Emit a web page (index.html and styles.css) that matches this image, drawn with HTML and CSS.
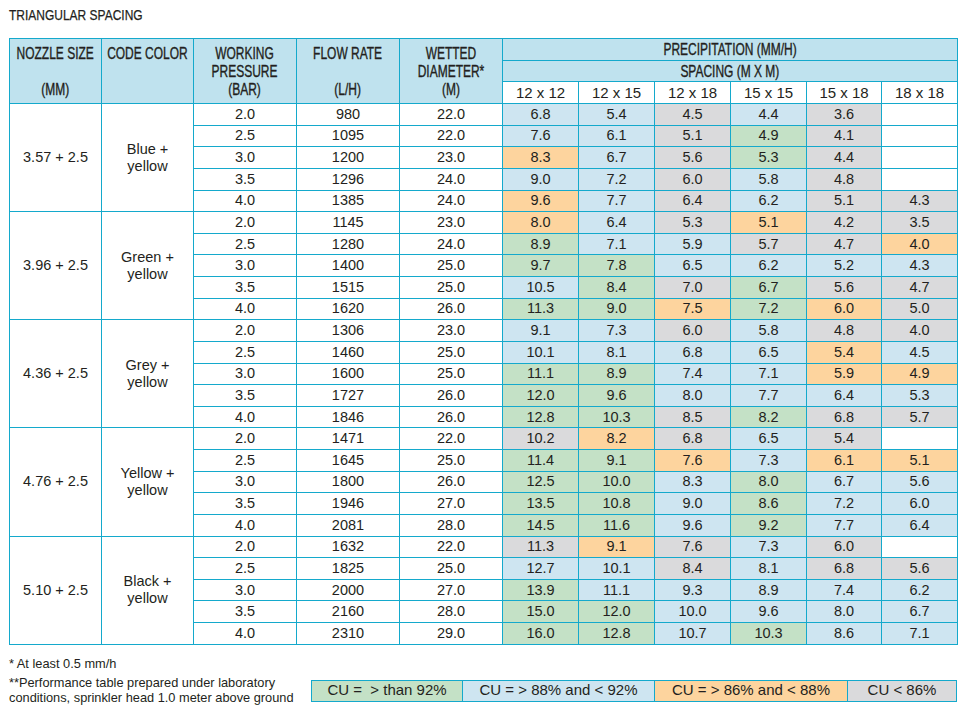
FILE: index.html
```html
<!DOCTYPE html>
<html>
<head>
<meta charset="utf-8">
<title>Triangular spacing</title>
<link rel="stylesheet" href="styles.css">
</head>
<body>
<div class="page">
  <h1 class="title"><span class="cn">TRIANGULAR SPACING</span></h1>
  <table class="perf">
    <colgroup>
      <col class="c-noz"><col class="c-code"><col class="c-wp"><col class="c-fr"><col class="c-wd">
      <col class="c-sp"><col class="c-sp"><col class="c-sp"><col class="c-sp"><col class="c-sp5"><col class="c-sp6">
    </colgroup>
    <thead>
      <tr class="h1">
        <th rowspan="3" class="hd"><span class="cn">NOZZLE SIZE<br>&nbsp;<br>(MM)</span></th>
        <th rowspan="3" class="hd"><span class="cn">CODE COLOR</span></th>
        <th rowspan="3" class="hd"><span class="cn">WORKING<br>PRESSURE<br>(BAR)</span></th>
        <th rowspan="3" class="hd"><span class="cn">FLOW RATE<br>&nbsp;<br>(L/H)</span></th>
        <th rowspan="3" class="hd"><span class="cn">WETTED<br>DIAMETER*<br>(M)</span></th>
        <th colspan="6" class="hs"><span class="cn">PRECIPITATION (MM/H)</span></th>
      </tr>
      <tr class="h2">
        <th colspan="6" class="hs"><span class="cn">SPACING (M X M)</span></th>
      </tr>
      <tr class="h3">
        <th class="sl">12 x 12</th><th class="sl">12 x 15</th><th class="sl">12 x 18</th><th class="sl">15 x 15</th><th class="sl">15 x 18</th><th class="sl">18 x 18</th>
      </tr>
    </thead>
    <tbody>
      <tr><td rowspan="5">3.57 + 2.5</td><td rowspan="5" class="cc">Blue +<br>yellow</td><td>2.0</td><td>980</td><td>22.0</td><td class="b">6.8</td><td class="b">5.4</td><td class="y">4.5</td><td class="b">4.4</td><td class="y">3.6</td><td></td></tr>
      <tr><td>2.5</td><td>1095</td><td>22.0</td><td class="b">7.6</td><td class="b">6.1</td><td class="y">5.1</td><td class="g">4.9</td><td class="y">4.1</td><td></td></tr>
      <tr><td>3.0</td><td>1200</td><td>23.0</td><td class="o">8.3</td><td class="b">6.7</td><td class="y">5.6</td><td class="g">5.3</td><td class="y">4.4</td><td></td></tr>
      <tr><td>3.5</td><td>1296</td><td>24.0</td><td class="b">9.0</td><td class="b">7.2</td><td class="y">6.0</td><td class="b">5.8</td><td class="y">4.8</td><td></td></tr>
      <tr><td>4.0</td><td>1385</td><td>24.0</td><td class="o">9.6</td><td class="b">7.7</td><td class="y">6.4</td><td class="b">6.2</td><td class="y">5.1</td><td class="y">4.3</td></tr>

      <tr><td rowspan="5">3.96 + 2.5</td><td rowspan="5" class="cc">Green +<br>yellow</td><td>2.0</td><td>1145</td><td>23.0</td><td class="o">8.0</td><td class="b">6.4</td><td class="y">5.3</td><td class="o">5.1</td><td class="y">4.2</td><td class="y">3.5</td></tr>
      <tr><td>2.5</td><td>1280</td><td>24.0</td><td class="g">8.9</td><td class="b">7.1</td><td class="b">5.9</td><td class="y">5.7</td><td class="y">4.7</td><td class="o">4.0</td></tr>
      <tr><td>3.0</td><td>1400</td><td>25.0</td><td class="g">9.7</td><td class="g">7.8</td><td class="b">6.5</td><td class="b">6.2</td><td class="b">5.2</td><td class="b">4.3</td></tr>
      <tr><td>3.5</td><td>1515</td><td>25.0</td><td class="b">10.5</td><td class="g">8.4</td><td class="y">7.0</td><td class="g">6.7</td><td class="y">5.6</td><td class="y">4.7</td></tr>
      <tr><td>4.0</td><td>1620</td><td>26.0</td><td class="g">11.3</td><td class="g">9.0</td><td class="o">7.5</td><td class="g">7.2</td><td class="o">6.0</td><td class="y">5.0</td></tr>

      <tr><td rowspan="5">4.36 + 2.5</td><td rowspan="5" class="cc">Grey +<br>yellow</td><td>2.0</td><td>1306</td><td>23.0</td><td class="b">9.1</td><td class="b">7.3</td><td class="y">6.0</td><td class="b">5.8</td><td class="y">4.8</td><td class="y">4.0</td></tr>
      <tr><td>2.5</td><td>1460</td><td>25.0</td><td class="b">10.1</td><td class="b">8.1</td><td class="b">6.8</td><td class="b">6.5</td><td class="o">5.4</td><td class="b">4.5</td></tr>
      <tr><td>3.0</td><td>1600</td><td>25.0</td><td class="g">11.1</td><td class="g">8.9</td><td class="b">7.4</td><td class="b">7.1</td><td class="o">5.9</td><td class="o">4.9</td></tr>
      <tr><td>3.5</td><td>1727</td><td>26.0</td><td class="g">12.0</td><td class="g">9.6</td><td class="b">8.0</td><td class="b">7.7</td><td class="b">6.4</td><td class="b">5.3</td></tr>
      <tr><td>4.0</td><td>1846</td><td>26.0</td><td class="g">12.8</td><td class="g">10.3</td><td class="y">8.5</td><td class="g">8.2</td><td class="y">6.8</td><td class="y">5.7</td></tr>

      <tr><td rowspan="5">4.76 + 2.5</td><td rowspan="5" class="cc">Yellow +<br>yellow</td><td>2.0</td><td>1471</td><td>22.0</td><td class="y">10.2</td><td class="o">8.2</td><td class="y">6.8</td><td class="b">6.5</td><td class="y">5.4</td><td></td></tr>
      <tr><td>2.5</td><td>1645</td><td>25.0</td><td class="g">11.4</td><td class="g">9.1</td><td class="o">7.6</td><td class="b">7.3</td><td class="o">6.1</td><td class="o">5.1</td></tr>
      <tr><td>3.0</td><td>1800</td><td>26.0</td><td class="g">12.5</td><td class="g">10.0</td><td class="b">8.3</td><td class="g">8.0</td><td class="b">6.7</td><td class="b">5.6</td></tr>
      <tr><td>3.5</td><td>1946</td><td>27.0</td><td class="g">13.5</td><td class="g">10.8</td><td class="b">9.0</td><td class="g">8.6</td><td class="b">7.2</td><td class="b">6.0</td></tr>
      <tr><td>4.0</td><td>2081</td><td>28.0</td><td class="g">14.5</td><td class="g">11.6</td><td class="b">9.6</td><td class="g">9.2</td><td class="b">7.7</td><td class="b">6.4</td></tr>

      <tr><td rowspan="5">5.10 + 2.5</td><td rowspan="5" class="cc">Black +<br>yellow</td><td>2.0</td><td>1632</td><td>22.0</td><td class="y">11.3</td><td class="o">9.1</td><td class="y">7.6</td><td class="b">7.3</td><td class="y">6.0</td><td></td></tr>
      <tr><td>2.5</td><td>1825</td><td>25.0</td><td class="b">12.7</td><td class="b">10.1</td><td class="y">8.4</td><td class="b">8.1</td><td class="y">6.8</td><td class="y">5.6</td></tr>
      <tr><td>3.0</td><td>2000</td><td>27.0</td><td class="g">13.9</td><td class="b">11.1</td><td class="b">9.3</td><td class="b">8.9</td><td class="b">7.4</td><td class="b">6.2</td></tr>
      <tr><td>3.5</td><td>2160</td><td>28.0</td><td class="g">15.0</td><td class="g">12.0</td><td class="b">10.0</td><td class="b">9.6</td><td class="b">8.0</td><td class="b">6.7</td></tr>
      <tr><td>4.0</td><td>2310</td><td>29.0</td><td class="g">16.0</td><td class="g">12.8</td><td class="b">10.7</td><td class="g">10.3</td><td class="b">8.6</td><td class="b">7.1</td></tr>
    </tbody>
  </table>

  <div class="notes">
    <p class="note1">* At least 0.5 mm/h</p>
    <div class="note-row">
      <p class="note2">**Performance table prepared under laboratory<br>conditions, sprinkler head 1.0 meter above ground</p>
      <div class="legend">
        <div class="lg g l1">CU =&nbsp; &gt; than 92%</div>
        <div class="lg b l2">CU = &gt; 88% and &lt; 92%</div>
        <div class="lg o l3">CU = &gt; 86% and &lt; 88%</div>
        <div class="lg y l4">CU &lt; 86%</div>
      </div>
    </div>
  </div>
</div>
</body>
</html>
```
FILE: styles.css
```css
* { box-sizing: border-box; }

body {
  margin: 0;
  background: #ffffff;
  color: #231f20;
  font-family: "Liberation Sans", Arial, sans-serif;
}

.page {
  width: 966px;
  padding: 6px 9px 0 9px;
}

/* condensed look (Univers Condensed substitute) */
.cn {
  display: inline-block;
  transform: scaleX(0.74);
  transform-origin: center;
  -webkit-text-stroke: 0.35px #231f20;
}

.hd .cn,
.hs .cn {
  margin: 0 -30px;
}

.title {
  margin: 0 0 14px 0;
  font-weight: normal;
  font-size: 14.8px;
  line-height: 18px;
  color: #231f20;
}

.title .cn {
  transform: scaleX(0.81);
  transform-origin: left center;
  -webkit-text-stroke: 0.25px #231f20;
}

.perf {
  border-collapse: collapse;
  table-layout: fixed;
  width: 948px;
  font-size: 14.5px;
}

.c-noz { width: 92px; }
.c-code { width: 92px; }
.c-wp { width: 103px; }
.c-fr { width: 103px; }
.c-wd { width: 103px; }
.c-sp { width: 76px; }
.c-sp5 { width: 75px; }
.c-sp6 { width: 76px; }

.perf th,
.perf td {
  border: 1px solid #14a9cc;
  padding: 0;
  text-align: center;
  font-weight: normal;
}

.perf td { line-height: 17px; }

.perf thead tr.h1 { height: 22px; }
.perf thead tr.h2 { height: 21px; }
.perf thead tr.h3 { height: 22px; }
.perf tbody tr { height: 21.64px; }

.hd {
  background: #bfe2ee;
  vertical-align: top;
  padding-top: 6px !important;
  font-size: 16.2px;
  line-height: 17.8px;
  white-space: nowrap;
}

.hs {
  background: #bfe2ee;
  font-size: 16.2px;
  line-height: 17px;
  white-space: nowrap;
}

.sl {
  background: #ffffff;
  font-size: 15px;
  line-height: 17px;
}

.cc { line-height: 17.5px; }

.b { background: #cee5f1; }
.g { background: #c4e1c6; }
.o { background: #fdd49e; }
.y { background: #dadadc; }

.notes {
  margin-top: 12.5px;
  font-size: 12.8px;
  line-height: 14.5px;
}

.note1 { margin: 0; }

.note-row {
  display: flex;
  align-items: center;
  margin-top: 4.5px;
}

.note2 { margin: 0; }

.legend {
  margin-left: auto;
  display: flex;
  width: 646px;
  height: 22px;
  border: 1px solid #14a9cc;
  font-size: 15px;
}

.lg {
  display: flex;
  align-items: center;
  justify-content: center;
  border-left: 1px solid #14a9cc;
}

.lg.l1 { width: 150px; border-left: none; }
.lg.l2 { width: 192px; }
.lg.l3 { width: 193px; }
.lg.l4 { flex: 1; }
```
